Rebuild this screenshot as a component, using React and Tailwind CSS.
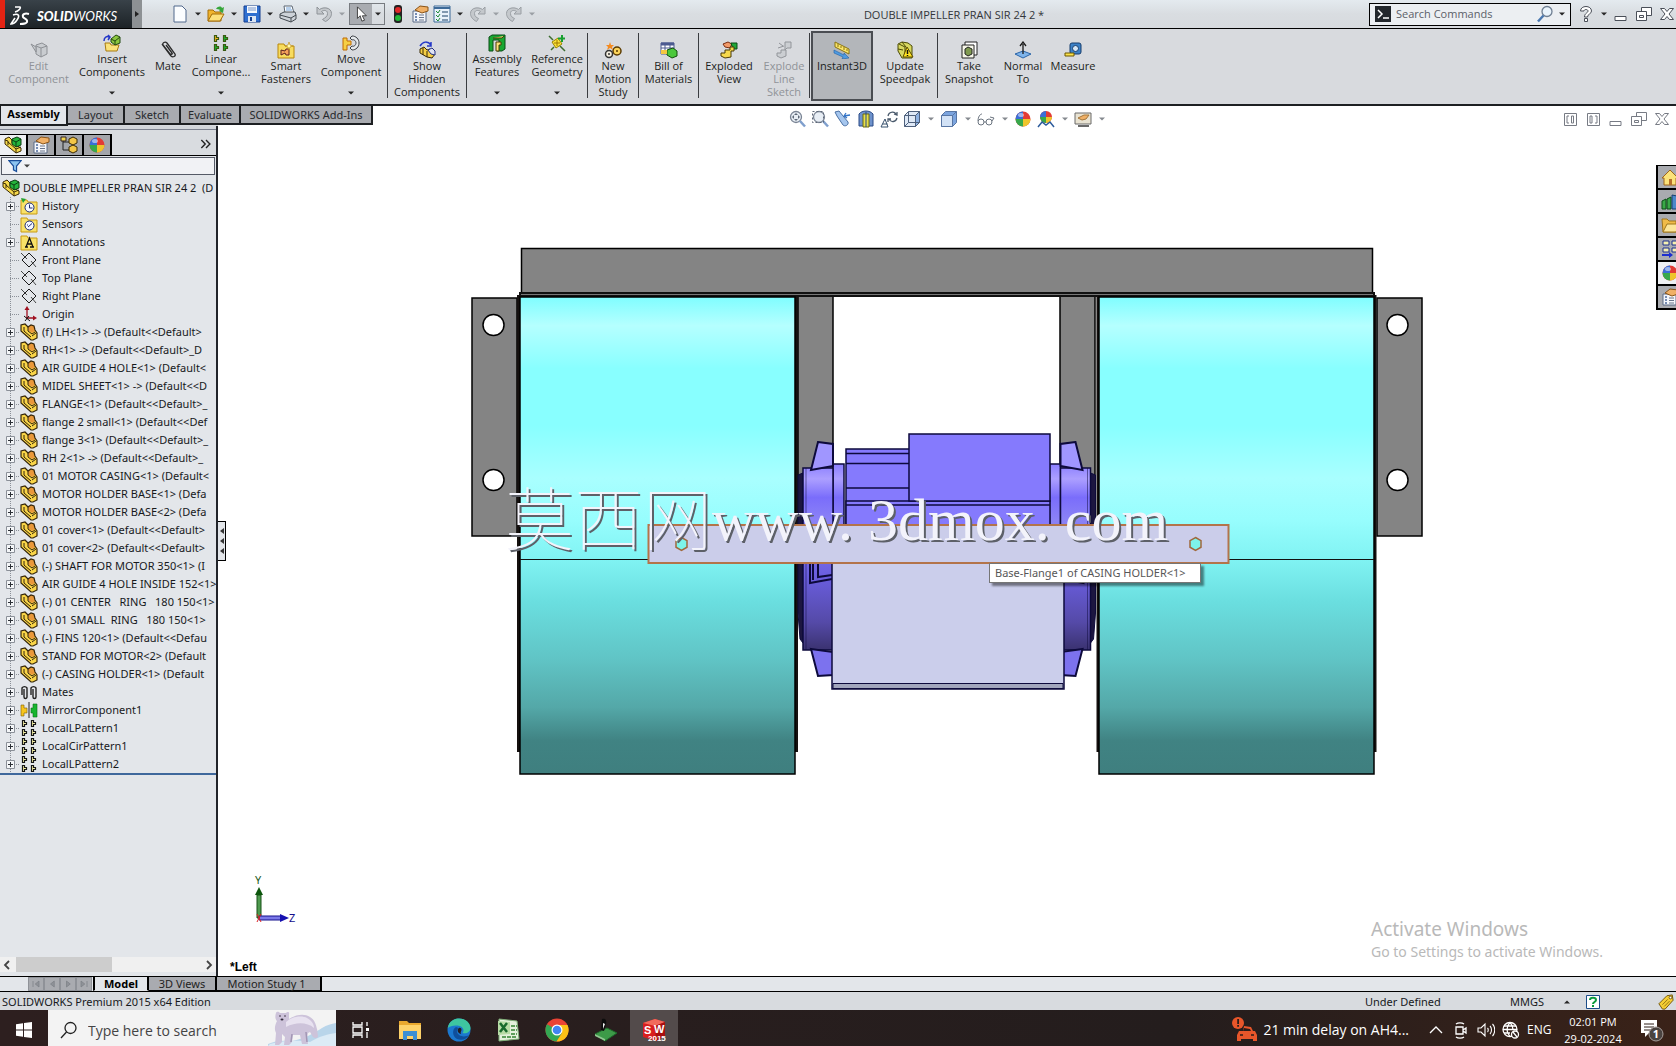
import clsx from 'clsx';

const Icon = ({ size = 'h-[18px] w-[18px]', children }) => (
    <svg viewBox="0 0 18 18" className={clsx('shrink-0', size)} fill="none" aria-hidden="true">
        {children}
    </svg>
);

const Caret = ({ className = 'text-neutral-800', up = false }) => (
    <svg viewBox="0 0 6 4" className={clsx('h-1 w-1.5 shrink-0', className)} fill="currentColor" aria-hidden="true">
        <path d={up ? 'M0 3.5h6L3 .5z' : 'M0 .5h6L3 3.5z'} />
    </svg>
);

/* ---------- shared glyphs ---------- */

const PartIcon = () => (
    <Icon>
        <path d="M1 2l4-1 3 3 3-2 3 1 1 4 2 3v5l-4 2h-2L1 8z" fill="#f9d548" />
        <path d="M8 4l3-2 3 1 1 5-3 2-4-3z" fill="#e9983a" />
        <path d="M1 2v6l10 9h2l4-2v-5l-2-3-1-4-3-1-3 2-3-3z" stroke="#33250a" strokeWidth="1.200" />
        <path d="M4 4v4l7 6M8 4v4l4 3 3-2M12 13l4-3" stroke="#33250a" />
    </Icon>
);

const AssemblyIcon = () => (
    <Icon>
        <path d="M1 3l4-2 3 3v3l9 5v3l-5 2L1 8z" fill="#f6d94c" stroke="#3a2a05" />
        <path d="M1 4l3 1v4M4 6l8 7v4M12 13l5-2" stroke="#3a2a05" />
        <path d="M8 3l5-2 4 2v6l-5 2-4-3z" fill="#25b43c" stroke="#0b3d12" />
        <path d="M8 4l4 2 5-3M12 6v5" stroke="#0b3d12" />
    </Icon>
);

const FolderIcon = ({ kind }) => (
    <Icon>
        <path d="M1 3h6l1 2h9v12H1z" fill="#f8e168" stroke="#c99a12" />
        {kind === 'A' && <path d="M5 14h3M10 14h4M6 14l3.500-9 3.500 9M7.500 11h4" stroke="#111" strokeWidth="1.300" />}
        {kind === 'history' && <path d="M1 1l5 1-3 4z" fill="#21a333" />}
        {kind !== 'A' && (
            <>
                <circle cx="9.500" cy="10.500" r="4.500" fill="#f5f8ff" stroke="#1c2a70" />
                <path d={kind === 'history' ? 'M9.500 7.500v3.500h3' : 'M8 12l4-3.500M7 10h1'} stroke="#1c2a70" />
            </>
        )}
    </Icon>
);

const PlaneIcon = () => (
    <Icon>
        <path d="M9 2l7 7-7 7-7-7z" stroke="#1a1a1a" />
        <path d="M1 2l6 6M11 10l5 6" stroke="#1a1a1a" strokeWidth=".8" />
    </Icon>
);

const OriginIcon = () => (
    <Icon>
        <path d="M7 14V3M6 13h9" stroke="#a01020" strokeWidth="1.300" />
        <path d="M7 1L4.500 5h5zM17 13l-4-2.500v5z" fill="#a01020" />
        <path d="M4 11l6 5M5 16l4-5" stroke="#111" />
    </Icon>
);

const ClipPair = () => (
    <Icon>
        <path d="M2 12V5a3 3 0 015 0v9a1.500 1.500 0 01-3 0V6M11 12V5a3 3 0 015 0v9a1.500 1.500 0 01-3 0V6" stroke="#222" strokeWidth="1.400" />
    </Icon>
);

const MirrorIcon = () => (
    <Icon>
        <path d="M1 4h3v3h3v5H4v3H1z" fill="#f7c51e" stroke="#7c5b00" strokeWidth=".6" />
        <path d="M17 3h-4v4h-2v5h2v4h4z" fill="#16b52f" stroke="#08701a" strokeWidth=".6" />
        <path d="M9 1v16" stroke="#222" />
    </Icon>
);

const PatternIcon = ({ a = '#f8f3a8', b = '#f8f3a8', stroke = '#161616' }) => (
    <Icon>
        <g stroke={stroke} strokeWidth="1.200">
            <path d="M2.500 1.500v6h2v-2h2v-2h-2v-2z" fill={a} />
            <path d="M11.500 1.500v6h2v-2h2v-2h-2v-2z" fill={b} />
            <path d="M2.500 10.500v6h2v-2h2v-2h-2v-2z" fill={b} />
            <path d="M11.500 10.500v6h2v-2h2v-2h-2v-2z" fill={b} />
        </g>
    </Icon>
);

const BallIcon = () => (
    <Icon>
        <circle cx="9" cy="9" r="7.500" fill="#e23b35" />
        <path d="M9 9V1.500A7.500 7.500 0 001.500 9z" fill="#3a6ed8" />
        <path d="M9 9h7.500A7.500 7.500 0 019 16.500z" fill="#eec52c" />
        <path d="M9 9H1.500A7.500 7.500 0 009 16.500z" fill="#37a84c" />
        <ellipse cx="7" cy="5" rx="3" ry="2" fill="#fff" opacity=".5" />
    </Icon>
);

const PropertyIcon = () => (
    <Icon>
        <path d="M2 6h13v11H2z" fill="#f4f6fa" stroke="#5b6b86" />
        <path d="M4 9h2M4 12h2M4 15h2" stroke="#4c6a9c" strokeWidth="1.300" />
        <path d="M8 10h5M8 12.500h5M8 15h5" stroke="#68748a" />
        <path d="M4 5l5-4 8 1v4l-6 2z" fill="#f0b066" stroke="#8a5417" />
    </Icon>
);

const ConfigIcon = () => (
    <Icon>
        <path d="M3 2v12h7M3 6h7" stroke="#222" />
        <path d="M1 1h5v4H1z" fill="#f0d44e" stroke="#322" />
        <path d="M9 3l4-2 4 2v4l-4 2-4-2zM9 11l4-2 4 2v4l-4 2-4-2z" fill="#f2c648" stroke="#3a2a05" />
    </Icon>
);

/* ---------- title bar ---------- */

const titleIcons = {
    New: <path d="M3 1h8l4 4v12H3z" fill="#fbfdff" stroke="#51688c" />,
    Open: (
        <>
            <path d="M1 5h5l2 2h6v9H1z" fill="#f0b42e" stroke="#a36d08" />
            <path d="M1 16l4-7h12l-4 7z" fill="#fce07a" stroke="#a36d08" />
            <path d="M9 4c2-3 5-3 6-1l2-1-1 6-4-2 1-1c-1-1-3-1-4-1z" fill="#37a63a" />
        </>
    ),
    Save: (
        <>
            <path d="M1 1h16v16H1z" fill="#2f6fd0" stroke="#143f8f" />
            <path d="M4 1h10v7H4z" fill="#f5f8fd" />
            <path d="M5 3h8M5 5h8" stroke="#7b97c8" />
            <path d="M5 11h8v6H5z" fill="#dce5f2" />
            <path d="M7 12h2v4H7z" fill="#143f8f" />
        </>
    ),
    Print: (
        <>
            <path d="M5 1h8l2 7H6z" fill="#fff" stroke="#5b6775" />
            <path d="M7 3h5M7 5h6" stroke="#6fa0d8" />
            <path d="M1 9l4-2h11l1 3v4l-5 3-11-4z" fill="#cdd2d8" stroke="#42494f" />
            <path d="M1 10l11 3 5-3M12 13v4" stroke="#42494f" />
        </>
    ),
    Undo: <path d="M2 2v7h7L6.500 6.500c3-2 6-1 6 2s-2 4-5 6l3 2c4-2 6-5 6-8 0-6-8-7-12-4z" fill="#c4c8cc" stroke="#8e9398" />,
    Redo: <path d="M16 2v7H9l2.500-2.500c-3-2-6-1-6 2s2 4 4 5l-2 3c-4-2-6-5-6-8 0-6 8-7 12-4z" fill="#c4c8cc" stroke="#9a9fa4" />,
    Traffic: (
        <>
            <rect x="5" y="0" width="8" height="18" rx="3" fill="#222" />
            <circle cx="9" cy="5" r="3" fill="#e02828" />
            <circle cx="9" cy="13" r="3" fill="#20b838" />
        </>
    ),
    Options: (
        <>
            <path d="M1 1h16v16H1z" fill="#e8f1fb" stroke="#3c6a98" />
            <path d="M1 3h16" stroke="#3c6a98" strokeWidth="2" />
            <path d="M3 6l2 2 2-3M3 10l2 2 2-3M3 14l2 2 2-3" stroke="#1d8a34" />
            <path d="M9 7h6M9 11h6M9 15h6" stroke="#5e7b98" strokeWidth="1.500" />
        </>
    ),
};

const ToolButton = ({ name, arrow = 'text-neutral-800' }) => (
    <button type="button" aria-label={name} className="flex h-[22px] items-center gap-[6px]">
        <Icon>{titleIcons[name]}</Icon>
        {arrow && <Caret className={arrow} />}
    </button>
);

const WindowButtons = ({ stroke = '#4a4f58' }) => (
    <>
        <button type="button" aria-label="Minimize">
            <Icon>
                <path d="M3 11.500h11v4H3z" fill="#fff" stroke={stroke} />
            </Icon>
        </button>
        <button type="button" aria-label="Restore">
            <Icon>
                <path d="M6.500 2.500h10v8h-10z" fill="#fff" stroke={stroke} />
                <path d="M1.500 6.500h10v9h-10z" fill="#fff" stroke={stroke} />
                <path d="M4.500 10.500h4v2h-4z" stroke={stroke} />
            </Icon>
        </button>
        <button type="button" aria-label="Close">
            <Icon>
                <path d="M2.500 3.500h4L9 6.500l2.500-3h4L11 9l4.500 5.500h-4L9 11.500l-2.500 3h-4L7 9z" fill="#fff" stroke={stroke} />
            </Icon>
        </button>
    </>
);

const TitleBar = () => (
    <header className="flex h-[29px] shrink-0 items-center border-b border-black bg-linear-to-b from-[#e4eaef] via-[#d9dde1] to-[#d7dade] font-['Open_Sans',sans-serif] text-[11px]">
        <div className="flex h-full w-[132px] items-center gap-[7px] border-l-5 border-[#e42313] bg-linear-to-b from-[#394249] to-[#1d2327] pt-1 pl-[5px] text-white">
            <svg viewBox="0 0 20 22" className="h-[22px] w-5 shrink-0" fill="none" stroke="#fff" strokeWidth="1.600" aria-hidden="true">
                <path d="M5 2h5c1 1-1 4-5 5M3 10c6-2 7 1 4 5-2 3-3 4-6 4l4-6" />
                <path d="M19 9c-4-1-7 0-6 3 1 2 5 2 4 5-1 2-4 2-7 2" strokeWidth="2" />
            </svg>
            <span className="font-[Lato] text-[13px] leading-4 italic">
                <b className="font-black">SOLID</b>WORKS
            </span>
        </div>
        <button type="button" aria-label="Show menu" className="flex h-full w-[10px] items-center justify-center bg-[#8d9194]">
            <svg viewBox="0 0 4 6" className="h-1.5 w-1" fill="#222" aria-hidden="true">
                <path d="M0 0v6l4-3z" />
            </svg>
        </button>

        <div className="ml-[29px] flex items-center gap-[6px]">
            <ToolButton name="New" />
            <ToolButton name="Open" />
            <ToolButton name="Save" />
            <ToolButton name="Print" />
            <ToolButton name="Undo" arrow="text-[#9a9fa4]" />
        </div>
        <div className="ml-1 flex items-center gap-1">
            <button type="button" aria-label="Select" className="flex h-[22px] w-9 items-center border border-[#777b80]">
                <span className="flex h-full w-[22px] items-center justify-center bg-[#a9acb1]">
                    <Icon size="h-4 w-4">
                        <path d="M5 1v13l3-3 2 6 3-1-2.500-5H15z" fill="#fff" stroke="#333" />
                    </Icon>
                </span>
                <span className="flex flex-1 justify-center">
                    <Caret />
                </span>
            </button>
            <ToolButton name="Traffic" arrow={null} />
            <button type="button" aria-label="File properties">
                <PropertyIcon />
            </button>
            <ToolButton name="Options" />
        </div>
        <div className="ml-[6px] flex items-center gap-[6px]">
            <ToolButton name="Redo" arrow="text-[#9a9fa4]" />
            <ToolButton name="Redo" arrow="text-[#9a9fa4]" />
        </div>

        <h1 className="flex-1 pt-0.5 pl-1 text-center leading-4 text-[#33363a]">DOUBLE IMPELLER PRAN SIR 24 2 *</h1>

        <label className="flex h-[23px] w-[202px] items-center border border-black bg-[#eceff2] px-[5px]">
            <svg viewBox="0 0 16 16" className="h-4 w-4 shrink-0" fill="none" aria-hidden="true">
                <path d="M0 0h16v16H0z" fill="#23272c" />
                <path d="M3 4l4 4-4 4M8 12h6" stroke="#fff" strokeWidth="1.500" />
            </svg>
            <input aria-label="Search Commands" placeholder="Search Commands" className="w-0 flex-1 bg-transparent pl-[5px] outline-none placeholder:text-[#5b6068]" />
            <Icon>
                <circle cx="11" cy="6.500" r="5" fill="#eaf4fc" stroke="#6f7f92" strokeWidth="1.300" />
                <path d="M7.500 10.500L2 16.500" stroke="#4a78b0" strokeWidth="2.500" />
            </Icon>
            <Caret className="ml-[5px] text-neutral-800" />
        </label>
        <div className="ml-[6px] flex items-center gap-[5px]">
            <button type="button" aria-label="Help" className="flex items-center gap-[6px]">
                <Icon>
                    <path d="M3.500 6c0-6 11-6 11 0 0 3-4 3-4 6h-3c0-4 3.500-4 3.500-6 0-2-4-2-4 0zM7.500 13.500h3v3h-3z" fill="#fff" stroke="#4a4f58" />
                </Icon>
                <Caret />
            </button>
            <WindowButtons />
        </div>
    </header>
);

/* ---------- ribbon ---------- */

const ribbonIcons = {
    edit: (
        <g stroke="#8d9095" fill="#c9ccd0">
            <path d="M6 4l6-2 5 3v8l-6 3-5-3z" />
            <path d="M6 5l5 2 6-2M11 7v9M1 3l5 3v5z" />
        </g>
    ),
    insert: (
        <>
            <path d="M2 9h5l1 2h8l-2 6H3z" fill="#fbe27a" stroke="#a87a10" />
            <path d="M8 5l5-4 4 2v6l-5 2-4-3z" fill="#8cc63f" stroke="#234b12" />
            <path d="M8 5l4 2 5-4M12 7v4" stroke="#234b12" />
            <path d="M1 7c0-4 3-5 5-4M5 1l2 2-2 3" stroke="#2538c8" strokeWidth="1.500" />
        </>
    ),
    mate: <path d="M3 3l9 12c2 2 5 0 4-2L8 2C6 0 3 2 4 4l7 9c1 1 3 0 2-1L7 4" stroke="#2a2a2a" strokeWidth="1.300" />,
    smart: (
        <>
            <path d="M1 3h6l1 2h9v12H1z" fill="#f8dc5e" stroke="#b8860b" />
            <path d="M4 9l4 1 1-2h3v6H9l-1-2-4 2z" fill="#f5a15a" stroke="#5a2020" />
            <path d="M12 1l1 3 3 1-3 1-1 3-1-3-3-1 3-1z" fill="#fff8b0" stroke="#b8860b" strokeWidth=".6" />
        </>
    ),
    move: (
        <>
            <path d="M1 4h4v3h4v4H5v5H1z" fill="#f6cf45" stroke="#c06a00" />
            <path d="M8 4l2-2c4 0 7 3 7 7s-3 7-7 7l-2-2 2-2c2 1 4-1 4-3s-2-4-4-3z" fill="#e6e9ec" stroke="#3c3f44" />
        </>
    ),
    hidden: (
        <>
            <path d="M2 8l4-2 3 3 3-1 5 5-3 4-5-1-7-4z" fill="#f6cf45" stroke="#3a2a05" />
            <path d="M10 9l4-2 3 3v4l-4-1z" fill="#dfe3f4" stroke="#222f80" />
            <path d="M2 5c3-5 8-5 11-1M13 1v4H9" stroke="#2538c8" strokeWidth="1.500" />
            <path d="M5 7v7M9 10v6" stroke="#3a2a05" />
        </>
    ),
    features: (
        <>
            <path d="M1 3l3-2h13v14l-3 2H9v-6h2V6H5v11H1z" fill="#19a832" stroke="#0b4d16" />
            <path d="M5 4h9l2-2M8 8h5v3h-2v6H8z" fill="#fbe27a" stroke="#4b3a05" />
        </>
    ),
    reference: (
        <>
            <path d="M4 8l6-4 4 6-6 4z" fill="#fbe338" stroke="#9a8200" />
            <path d="M1 2l4 4M12 12l5 5M3 16l3-3" stroke="#3c6c30" strokeWidth="1.500" />
            <path d="M14 1v7M10 4.500h7" stroke="#18a030" strokeWidth="2" />
            <path d="M9 6v6M6 9h6" stroke="#a07800" />
        </>
    ),
    motion: (
        <>
            <circle cx="13" cy="10" r="4" fill="#fbd35a" stroke="#5a3a00" strokeWidth="1.500" />
            <circle cx="5" cy="13" r="3.500" fill="#f5efe0" stroke="#333" strokeWidth="1.500" />
            <circle cx="13" cy="10" r="1" fill="#5a3a00" />
            <circle cx="5" cy="13" r="1" fill="#333" />
            <path d="M6 1l1 3 3 0-2 2 1 3-3-2-3 2 1-3-2-2h3z" fill="#f58a1e" />
        </>
    ),
    bom: (
        <>
            <path d="M1 2h13v11H1z" fill="#fff" stroke="#4c5a90" />
            <path d="M1 3h13" stroke="#4c5a90" strokeWidth="3" />
            <path d="M1 7h13M5 3v10M10 3v10" stroke="#4c5a90" />
            <path d="M7 9l6-2 4 3v5l-5 2-5-3z" fill="#4cc83c" stroke="#134f0c" />
            <path d="M1 9h6v4H1z" fill="#f5c842" />
        </>
    ),
    exploded: (
        <>
            <path d="M3 3l5-2 4 2-2 4-5-1z" fill="#f29b6a" stroke="#7a2c10" />
            <path d="M11 2h6v6h-4z" fill="#20a838" stroke="#0b4d16" />
            <path d="M1 12h4v-3h5V6h4v4h-3v6l-6 1-4-2z" fill="#f6d94c" stroke="#4b3a05" />
        </>
    ),
    explodeLine: (
        <g stroke="#92959a" fill="#cbced2">
            <path d="M10 1h6v6h-4l-2 2z" />
            <path d="M2 12h4V9h5v6l-5 2-4-2z" />
            <path d="M4 2l4 3M3 7l6-2" />
        </g>
    ),
    instant: (
        <>
            <path d="M2 1l14 7v5L2 6z" fill="#fbe66a" stroke="#8a7410" />
            <path d="M5 3v3M8 5v2M11 6v3M14 8v2" stroke="#8a7410" />
            <path d="M1 9l10 5v-2l5 5-7 1 1-2L1 12z" fill="#4f9be0" stroke="#1f5fa8" strokeWidth=".6" />
        </>
    ),
    update: (
        <>
            <path d="M2 3l4-2 6 1 4 3v12H6L2 10z" fill="#d8d860" stroke="#4b4a05" />
            <path d="M3 3l6 3v10M6 1l4 5M2 8l5 1" stroke="#4b4a05" />
            <path d="M11 6l6 10H7z" fill="#ffe320" stroke="#5a4a00" />
            <path d="M11.500 9v4M11.500 14v1" stroke="#111" strokeWidth="1.500" />
        </>
    ),
    snapshot: (
        <>
            <path d="M5 1h12v13H5z" fill="#fff" stroke="#222" />
            <path d="M2 4h12v13H2z" fill="#f6f6e8" stroke="#222" />
            <path d="M5 8l3-2 4 2v5l-4 2-3-2z" fill="#7f9a50" stroke="#222" />
        </>
    ),
    normal: (
        <>
            <path d="M1 13l8-3 8 3-8 4z" fill="#7fb4ea" stroke="#2a64a8" />
            <path d="M9 13V3M6 5l3-4 3 4" stroke="#1a1a1a" strokeWidth="1.300" />
        </>
    ),
    measure: (
        <>
            <rect x="6" y="2" width="11" height="11" rx="2" fill="#3c82c8" stroke="#163c6c" />
            <circle cx="11.500" cy="7.500" r="3" fill="#d6e6f5" stroke="#163c6c" />
            <path d="M1 12h9v3H1z" fill="#fbe24c" stroke="#6a5600" />
        </>
    ),
};

const ribbonGroups = [
    [
        { label: 'Edit\nComponent', icon: 'edit', width: 'w-[77px]', disabled: true },
        { label: 'Insert\nComponents', icon: 'insert', width: 'w-[70px]', menu: true },
        { label: 'Mate', icon: 'mate', width: 'w-[42px]' },
        { label: 'Linear\nCompone...', icon: 'linear', width: 'w-16', menu: true },
        { label: 'Smart\nFasteners', icon: 'smart', width: 'w-[66px]' },
        { label: 'Move\nComponent', icon: 'move', width: 'w-16 mr-1', menu: true },
    ],
    [{ label: 'Show\nHidden\nComponents', icon: 'hidden', width: 'w-[78px]' }],
    [
        { label: 'Assembly\nFeatures', icon: 'features', width: 'w-[60px]', menu: true },
        { label: 'Reference\nGeometry', icon: 'reference', width: 'w-[60px]', menu: true },
    ],
    [{ label: 'New\nMotion\nStudy', icon: 'motion', width: 'w-[50px]' }],
    [{ label: 'Bill of\nMaterials', icon: 'bom', width: 'w-[59px]' }],
    [
        { label: 'Exploded\nView', icon: 'exploded', width: 'w-[60px]' },
        { label: 'Explode\nLine\nSketch', icon: 'explodeLine', width: 'w-[50px]', disabled: true },
    ],
    [
        { label: 'Instant3D', icon: 'instant', width: 'w-[62px] ml-px', active: true },
        { label: 'Update\nSpeedpak', icon: 'update', width: 'w-16' },
    ],
    [
        { label: 'Take\nSnapshot', icon: 'snapshot', width: 'w-[62px]' },
        { label: 'Normal\nTo', icon: 'normal', width: 'w-[46px]' },
        { label: 'Measure', icon: 'measure', width: 'w-[54px]' },
    ],
];

const ribbonPadding = (item) => {
    if (item.active) return 'border-2 border-[#4a4d52] bg-[#b3b6ba] pt-2';
    return item.menu ? 'pt-[3px]' : 'pt-[10px]';
};

const RibbonButton = ({ item }) => (
    <button
        type="button"
        disabled={item.disabled}
        className={clsx('flex h-[70px] flex-col items-center', item.width, ribbonPadding(item), item.disabled ? 'text-[#909398]' : 'text-[#1c1e21]')}
    >
        {item.icon === 'linear' ? <PatternIcon a="#f7b51e" b="#19b52f" stroke="#3a5a10" /> : <Icon>{ribbonIcons[item.icon]}</Icon>}
        <span className="whitespace-pre">{item.label}</span>
        {item.menu && <Caret className="mt-[13px] text-neutral-800" />}
    </button>
);

const Ribbon = () => (
    <div className="flex h-[77px] shrink-0 border-b-2 border-[#1d1f22] bg-[#d8dade] pt-0.5 font-['Open_Sans',sans-serif] text-[11px] leading-[13px]">
        {ribbonGroups.map((group, index) => (
            <div key={group[0].icon} className="flex">
                {index > 0 && <div className="mt-0.5 h-[65px] w-px bg-[#3a3c40]" />}
                {group.map((item) => (
                    <RibbonButton key={item.icon} item={item} />
                ))}
            </div>
        ))}
    </div>
);

/* ---------- feature manager ---------- */

const tabs = [
    { name: 'Assembly', width: 'w-[68px]' },
    { name: 'Layout', width: 'w-[57px]' },
    { name: 'Sketch', width: 'w-14' },
    { name: 'Evaluate', width: 'w-[60px]' },
    { name: 'SOLIDWORKS Add-Ins', width: 'w-[132px]' },
];

const part = (text) => ({ text, icon: <PartIcon />, open: true });

const treeRows = [
    { text: 'History', icon: <FolderIcon kind="history" />, open: true },
    { text: 'Sensors', icon: <FolderIcon kind="sensor" /> },
    { text: 'Annotations', icon: <FolderIcon kind="A" />, open: true },
    { text: 'Front Plane', icon: <PlaneIcon /> },
    { text: 'Top Plane', icon: <PlaneIcon /> },
    { text: 'Right Plane', icon: <PlaneIcon /> },
    { text: 'Origin', icon: <OriginIcon /> },
    part('(f) LH<1> -> (Default<<Default>'),
    part('RH<1> -> (Default<<Default>_D'),
    part('AIR GUIDE 4 HOLE<1> (Default<'),
    part('MIDEL SHEET<1> -> (Default<<D'),
    part('FLANGE<1> (Default<<Default>_'),
    part('flange 2 small<1> (Default<<Def'),
    part('flange 3<1> (Default<<Default>_'),
    part('RH 2<1> -> (Default<<Default>_'),
    part('01 MOTOR CASING<1> (Default<'),
    part('MOTOR HOLDER BASE<1> (Defa'),
    part('MOTOR HOLDER BASE<2> (Defa'),
    part('01 cover<1> (Default<<Default>'),
    part('01 cover<2> (Default<<Default>'),
    part('(-) SHAFT FOR MOTOR 350<1> (I'),
    part('AIR GUIDE 4 HOLE INSIDE 152<1>'),
    part('(-) 01 CENTER   RING   180 150<1>'),
    part('(-) 01 SMALL  RING   180 150<1>'),
    part('(-) FINS 120<1> (Default<<Defau'),
    part('STAND FOR MOTOR<2> (Default'),
    part('(-) CASING HOLDER<1> (Default'),
    { text: 'Mates', icon: <ClipPair />, open: true },
    { text: 'MirrorComponent1', icon: <MirrorIcon />, open: true },
    { text: 'LocalLPattern1', icon: <PatternIcon />, open: true },
    { text: 'LocalCirPattern1', icon: <PatternIcon />, open: true },
    { text: 'LocalLPattern2', icon: <PatternIcon />, open: true },
];

const TreeBranch = ({ open }) => (
    <svg viewBox="0 0 20 18" className="h-[18px] w-5 shrink-0" fill="none" aria-hidden="true">
        <path d="M10.500 0v18M10 9.500h11" stroke="#8b9098" strokeDasharray="1 1" />
        {open && (
            <>
                <path d="M6.500 5.500h8v8h-8z" fill="#f4f6f8" stroke="#8b9098" />
                <path d="M8 9.500h5M10.500 7v5" stroke="#2c3036" />
            </>
        )}
    </svg>
);

const FeatureManager = () => (
    <aside className="flex min-h-0 flex-1 flex-col border-r-2 border-[#22242a] bg-[#e3e6ea]">
        <div className="h-1 shrink-0 border-b border-[#7d8290] bg-[#d3d6db]" />
        <div className="flex h-[26px] shrink-0 items-end border-b border-black bg-[#d9dce0]">
            {[<AssemblyIcon />, <PropertyIcon />, <ConfigIcon />, <BallIcon />].map((icon, index) => (
                <button
                    key={index}
                    type="button"
                    aria-label={['FeatureManager', 'PropertyManager', 'ConfigurationManager', 'DisplayManager'][index]}
                    className={clsx('flex h-[21px] w-7 items-center justify-center border-t border-r-2 border-black', index === 0 ? 'bg-[#eef0f3]' : 'bg-[#a4a6ab]')}
                >
                    {icon}
                </button>
            ))}
            <button type="button" aria-label="Expand panel" className="mr-[3px] mb-1 ml-auto">
                <Icon size="h-3.5 w-3.5">
                    <path d="M3 4l5 5-5 5M9 4l5 5-5 5" stroke="#222" strokeWidth="1.800" />
                </Icon>
            </button>
        </div>
        <button type="button" aria-label="Filter" className="mx-px mt-px flex h-[18px] shrink-0 items-center gap-[2px] border border-[#555a66] bg-[#f1f2f5] pl-[6px]">
            <Icon size="h-3.5 w-3.5">
                <path d="M1 2h16l-6 7v7l-4-2V9z" fill="#8cc4f0" stroke="#1a4e9a" strokeWidth="1.500" />
            </Icon>
            <Caret className="text-neutral-700" />
        </button>

        <ul className="mt-1 shrink-0 overflow-hidden border-b-2 border-[#3f689c] leading-[18px] whitespace-pre text-[#17191c]">
            <li className="flex h-[18px] items-center gap-[3px] pl-0.5">
                <AssemblyIcon />
                <span>DOUBLE IMPELLER PRAN SIR 24 2  (D</span>
            </li>
            {treeRows.map((row) => (
                <li key={row.text} className="flex h-[18px] items-center">
                    <TreeBranch open={row.open} />
                    {row.icon}
                    <span className="pl-1">{row.text}</span>
                </li>
            ))}
        </ul>

        <div className="mt-auto mb-1 flex h-[15px] shrink-0 items-center bg-[#f0f0f0] px-[3px]">
            <svg viewBox="0 0 8 10" className="h-2.5 w-2" fill="none" stroke="#444" strokeWidth="1.800" aria-hidden="true">
                <path d="M6 1L2 5l4 4" />
            </svg>
            <div className="ml-[5px] h-full w-24 bg-[#cdcdcd]" />
            <svg viewBox="0 0 8 10" className="ml-auto h-2.5 w-2" fill="none" stroke="#444" strokeWidth="1.800" aria-hidden="true">
                <path d="M2 1l4 4-4 4" />
            </svg>
        </div>
    </aside>
);

/* ---------- graphics area ---------- */

const lens = (
    <>
        <circle cx="8" cy="7" r="5.500" fill="#e8eef5" stroke="#7a8494" strokeWidth="1.300" />
        <path d="M12 11l5 5.500" stroke="#7f9fcd" strokeWidth="2.500" />
    </>
);

const viewIcons = {
    'Zoom to Fit': (
        <>
            {lens}
            <path d="M8 3l2 2H6zM8 11l2-2H6zM4 7l2-2v4zM12 7l-2-2v4z" fill="#5e6878" />
        </>
    ),
    'Zoom to Area': (
        <>
            {lens}
            <path d="M1.500 1.500h11v11h-11z" stroke="#5e6878" strokeDasharray="2 2" />
        </>
    ),
    'Previous View': (
        <>
            <path d="M1 2l4-1 9 11c1 3-3 5-5 3L3 6z" fill="#a5c6ee" stroke="#4a70a4" />
            <path d="M10 6l6-1M10 6l2-3M10 6l3 2" stroke="#3274c8" strokeWidth="1.300" />
        </>
    ),
    'Section View': (
        <>
            <path d="M2 4c3-4 11-4 14 0v12H2z" fill="#6e92cc" stroke="#2a4a86" />
            <path d="M6 4h6v13H6z" fill="#e8e04a" stroke="#6d6a10" />
            <path d="M9 2v15" stroke="#2a4a86" />
        </>
    ),
    'View Orientation': (
        <>
            <path d="M1 17l4-8 3 8zM2.500 14h5" stroke="#37506c" />
            <path d="M8 6c1-5 8-5 8-1M9 9c2 4 7 3 8-1M14 4l3 1v-3M11 9H8v3" stroke="#4a5a6c" strokeWidth="1.300" />
        </>
    ),
    'Display Pane': (
        <>
            <path d="M1.500 5.500l4-4h11v11l-4 4h-11z" fill="#dfe9f6" stroke="#4e607c" />
            <path d="M12.500 5.500l4-4v11l-4 4z" fill="#8eb2e2" stroke="#4e607c" />
            <path d="M1.500 5.500h11v11M5.500 1.500v11l-4 4M5.500 12.500h11" stroke="#4e607c" />
        </>
    ),
    'Display Style': (
        <>
            <path d="M1.500 5.500l4-4h11v11l-4 4h-11z" fill="#7ba4de" stroke="#5876a4" />
            <path d="M1.500 5.500h11v11h-11z" fill="#d2e2f6" stroke="#5876a4" />
            <path d="M12.500 5.500l4-4" stroke="#5876a4" />
        </>
    ),
    'Hide/Show Items': (
        <>
            <circle cx="4" cy="12" r="3" stroke="#6c7580" />
            <circle cx="12" cy="12" r="3" stroke="#6c7580" />
            <path d="M7 12h2M1 11c0-4 2-7 4-7M15 11l2-3-4-1" stroke="#6c7580" />
        </>
    ),
    'View Settings': (
        <>
            <path d="M1 3h16v11H1z" fill="#e9e3d2" stroke="#6a6a6a" />
            <path d="M4 16h11" stroke="#6a6a6a" strokeWidth="2" />
            <path d="M4 8l6-3 5 0-3 4-4 1z" fill="#f0b066" stroke="#a5763a" />
        </>
    ),
};

const ViewTool = ({ name, arrow, children }) => (
    <button type="button" aria-label={name} className={clsx('flex items-center gap-[7px]', arrow && 'pr-px')}>
        {children || <Icon>{viewIcons[name]}</Icon>}
        {arrow && <Caret className="text-[#85898f]" />}
    </button>
);

const ViewToolbar = () => (
    <div className="flex h-[26px] items-center justify-center gap-[5px]">
        <ViewTool name="Zoom to Fit" />
        <ViewTool name="Zoom to Area" />
        <ViewTool name="Previous View" />
        <ViewTool name="Section View" />
        <ViewTool name="View Orientation" />
        <ViewTool name="Display Pane" arrow />
        <ViewTool name="Display Style" arrow />
        <ViewTool name="Hide/Show Items" arrow />
        <ViewTool name="Edit Appearance">
            <BallIcon />
        </ViewTool>
        <ViewTool name="Apply Scene" arrow>
            <Icon>
                <circle cx="9" cy="7" r="6" fill="#e23b35" />
                <path d="M9 7V1a6 6 0 00-6 6z" fill="#3a6ed8" />
                <path d="M9 7h6a6 6 0 01-6 6z" fill="#eec52c" />
                <path d="M9 7H3a6 6 0 006 6z" fill="#37a84c" />
                <path d="M1 17l4-5 4 3 4-3 4 5" stroke="#2c5b9c" strokeWidth="1.500" />
            </Icon>
        </ViewTool>
        <ViewTool name="View Settings" arrow />
    </div>
);

const MotorEnd = () => (
    <g stroke="#0d0a3c">
        <path d="M833 464h11v62h-11z" fill="url(#cap)" strokeWidth="1.500" />
        <path d="M798 475l5-2v170l-3-4-2-26z" fill="#1c1640" />
        <path d="M803 468h30v182h-30z" fill="url(#cap)" strokeWidth="1.500" />
        <path d="M806 468v182" strokeOpacity=".5" />
        <path d="M818 442l15 2v22l-22 4z" fill="#a096ff" strokeWidth="2" />
        <path d="M811 649l22 3v23l-15 1z" fill="#7c72ee" strokeWidth="2" />
        <path d="M810 560v23l22-4M813 560v20M818 560v17l14-2" fill="none" strokeWidth="2" />
    </g>
);

const Model = () => (
    <svg viewBox="471 247 952 529" className="h-[529px] w-[952px]" fill="none" aria-label="Double impeller assembly">
        <defs>
            <linearGradient id="shell" x1="0" x2="0" y1="297" y2="774" gradientUnits="userSpaceOnUse">
                <stop offset="0" stopColor="#7ffdff" />
                <stop offset=".06" stopColor="#b5ffff" />
                <stop offset=".15" stopColor="#88ffff" />
                <stop offset=".27" stopColor="#88ffff" />
                <stop offset=".38" stopColor="#a9ffff" />
                <stop offset=".47" stopColor="#96fdfd" />
                <stop offset=".55" stopColor="#80f3f3" />
                <stop offset=".64" stopColor="#6adedf" />
                <stop offset=".76" stopColor="#60c4c5" />
                <stop offset=".86" stopColor="#54a8a8" />
                <stop offset=".93" stopColor="#408383" />
                <stop offset="1" stopColor="#3f7f7f" />
            </linearGradient>
            <linearGradient id="cap" x1="0" x2="0" y1="464" y2="650" gradientUnits="userSpaceOnUse">
                <stop offset="0" stopColor="#8b7fff" />
                <stop offset=".08" stopColor="#ac9fff" />
                <stop offset=".18" stopColor="#7a6dfb" />
                <stop offset=".3" stopColor="#8b82f6" />
                <stop offset=".6" stopColor="#6a5edf" />
                <stop offset=".85" stopColor="#554aa8" />
                <stop offset="1" stopColor="#3a3270" />
            </linearGradient>
        </defs>

        <g stroke="#000" strokeWidth="1.500" fill="#848484">
            <path d="M472 298h45v238h-45zM1377 298h45v238h-45z" />
            <path d="M798 296h35v200h-35zM1060 296h35v200h-35z" />
            <path d="M521.500 248.500h851v46h-851z" />
        </g>
        <path d="M519 294.500h856" stroke="#111" strokeWidth="5" />
        <path d="M521 294.500h852" stroke="#777" />
        <g fill="#fff" stroke="#000" strokeWidth="1.500">
            <circle cx="493.500" cy="325" r="10.500" />
            <circle cx="493.500" cy="480" r="10.500" />
            <circle cx="1397.500" cy="325" r="10.500" />
            <circle cx="1397.500" cy="480" r="10.500" />
        </g>

        <path d="M518.500 295v457M1375 295v457M796.500 296v456M1098 296v456" stroke="#15100f" strokeWidth="3" />
        <g fill="url(#shell)" stroke="#000" strokeWidth="1.500">
            <path d="M520 297h275v477H520z" />
            <path d="M1099 297h275v477h-275z" />
        </g>
        <path d="M520 559.500h275M1099 559.500h275" stroke="#111" />

        <MotorEnd />
        <g transform="translate(1893.500 0) scale(-1 1)">
            <MotorEnd />
        </g>
        <g stroke="#0d0a3c" strokeWidth="1.500" fill="#857afd">
            <path d="M846 449h64v77h-64z" />
            <path d="M846 501h204v25H846z" />
            <path d="M846 453.500h64M846 463.500h64M846 488h64M846 505h204" />
            <path d="M909 434h141v67H909z" />
        </g>
        <path d="M832 560h232v129H832z" fill="#cbceeb" stroke="#0d0a3c" strokeWidth="1.500" />
        <path d="M833 683.500h230v5H833z" fill="#a2a6bd" stroke="#0d0a3c" />

        <path d="M648.500 525h580v38h-580z" fill="#cbcdea" stroke="#b3744a" strokeWidth="2" />
        <g fill="#7df3ea" stroke="#a0683c" strokeWidth="1.500">
            <path d="M681.500 537.500l5.500 3.200v6.500l-5.500 3.200-5.500-3.200v-6.500z" />
            <path d="M1195.500 537.500l5.500 3.200v6.500l-5.500 3.200-5.500-3.200v-6.500z" />
        </g>
    </svg>
);

const Triad = () => (
    <svg viewBox="0 0 44 50" className="h-[50px] w-11" aria-label="View triad">
        <path d="M8 17h4v23H8z" fill="#4f9a4f" stroke="#175017" />
        <path d="M10 9l-4 8h8z" fill="#0c560c" />
        <path d="M10 38h22v4H10z" fill="#7a78e8" stroke="#15108c" />
        <path d="M40 40l-9-4v8z" fill="#1610b0" />
        <path d="M8 36l4 8M12 36l-4 8" stroke="#d22" />
    </svg>
);

const paneIcons = [
    {
        name: 'Resources',
        icon: (
            <Icon>
                <path d="M1 10l8-8 8 8h-2v7H3v-7z" fill="#fbe27a" stroke="#a0661a" />
                <path d="M8 11h3v6H8z" fill="#b8702a" />
            </Icon>
        ),
    },
    {
        name: 'Design Library',
        icon: (
            <Icon>
                <path d="M1 9l4-2v10H1zM6 7l4-2v12H6z" fill="#3aa848" stroke="#0b4d16" />
                <path d="M11 3l5 1v13h-5z" fill="#4c88c8" stroke="#173e70" />
            </Icon>
        ),
    },
    {
        name: 'File Explorer',
        icon: (
            <Icon>
                <path d="M1 3h5l2 2h7v11H2z" fill="#f0bb48" stroke="#a0761a" />
                <path d="M2 16l4-8h12l-3 8z" fill="#fce69a" stroke="#a0761a" />
            </Icon>
        ),
    },
    {
        name: 'View Palette',
        icon: (
            <Icon>
                <path d="M2 1h6v4H2zM11 1h6v4h-6zM2 8h6v4H2zM11 8h6v4h-6z" fill="#f6f1b0" stroke="#1c2e90" />
                <path d="M1 14h7v-2l4 3-4 3v-2H1z" fill="#1c2ed0" />
            </Icon>
        ),
    },
    { name: 'Appearances', icon: <BallIcon />, active: true },
    { name: 'Custom Properties', icon: <PropertyIcon /> },
];

const GraphicsArea = () => (
    <main className="relative flex min-w-0 flex-1 flex-col overflow-hidden bg-white">
        <ViewToolbar />
        <div className="absolute top-[4px] right-[5px] flex items-center gap-[5px]">
            <button type="button" aria-label="Collapse left">
                <Icon>
                    <path d="M3.500 3.500h12v12h-12z" stroke="#777b84" />
                    <path d="M8 6H6v7h2M10.500 6h2v7h-2z" stroke="#777b84" />
                </Icon>
            </button>
            <button type="button" aria-label="Collapse right">
                <Icon>
                    <path d="M3.500 3.500h12v12h-12z" stroke="#777b84" />
                    <path d="M6 6h2v7H6zM11 6h2v7h-2" stroke="#777b84" />
                </Icon>
            </button>
            <WindowButtons stroke="#777b84" />
        </div>

        <div className="mt-[115px] flex justify-center">
            <div className="relative shrink-0">
                <Model />
                <p className="absolute top-[233px] left-[34px] flex items-start font-['Liberation_Serif','Noto_Sans_CJK_SC',serif] text-[60px] leading-[80px] whitespace-nowrap text-[#f3f3fb] [text-shadow:2px_2px_0_#5d6068]">
                    <span className="font-['Noto_Sans_CJK_SC',sans-serif] text-[69px] leading-[70px] font-thin">莫西网</span>
                    <span>www. 3dmox. com</span>
                </p>
                <div role="tooltip" className="absolute top-[316px] left-[518px] w-[212px] border border-[#767676] bg-white px-[5px] leading-[18px] whitespace-nowrap text-[#575757] shadow-[3px_3px_2px_rgba(0,0,0,0.45)]">
                    Base-Flange1 of CASING HOLDER&lt;1&gt;
                </div>
            </div>
        </div>

        <div className="absolute top-[415px] left-0 flex h-10 w-2 flex-col items-center justify-center gap-1 border border-l-0 border-black bg-[#e3e6ea]">
            {[0, 1, 2].map((dot) => (
                <svg key={dot} viewBox="0 0 4 6" className="h-1.5 w-1" aria-hidden="true">
                    <path d="M4 0v6L0 3z" fill="#333" />
                </svg>
            ))}
        </div>

        <nav className="absolute top-[59px] right-0 flex w-5 flex-col border-t border-l-2 border-black">
            {paneIcons.map((pane) => (
                <button
                    key={pane.name}
                    type="button"
                    aria-label={pane.name}
                    className={clsx('flex h-6 items-center overflow-hidden border-b-2 border-black pl-[3px]', pane.active ? 'bg-[#eef0f3]' : 'bg-[#a9abb0]')}
                >
                    {pane.icon}
                </button>
            ))}
        </nav>

        <div className="mt-auto flex items-end justify-between">
            <div>
                <div className="relative mb-[30px] ml-[31px] w-11">
                    <Triad />
                    <span className="absolute -top-1.5 left-[6px] leading-4 text-[#1c5a1c]">Y</span>
                    <span className="absolute top-8 left-10 leading-4 text-[#15108c]">Z</span>
                </div>
                <p className="pl-3 font-[Arial,'Liberation_Sans',sans-serif] text-[12px] leading-[18px] font-bold text-black">*Left</p>
            </div>
            <div className="mr-[69px] mb-[14px] w-[236px] whitespace-nowrap text-[#b9b9b9]">
                <p className="text-[19px] leading-[25px]">Activate Windows</p>
                <p className="text-[14px] leading-5">Go to Settings to activate Windows.</p>
            </div>
        </div>
    </main>
);

/* ---------- bottom bars ---------- */

const SheetTabs = () => (
    <div className="flex h-4 shrink-0 border-y border-black bg-[#e3e6ea] leading-3">
        <div className="ml-7 flex">
            {['M4 4v8M12 4L7 8l5 4z', 'M11 4L6 8l5 4z', 'M6 4l5 4-5 4z', 'M12 4v8M4 4l5 4-5 4z'].map((d) => (
                <button key={d} type="button" aria-label="Scroll tabs" className="h-3.5 w-4 border border-[#8f9298] bg-[#a9abb0]">
                    <svg viewBox="0 0 16 16" className="h-3 w-3.5" fill="#8f9298" stroke="#7c8086" aria-hidden="true">
                        <path d={d} />
                    </svg>
                </button>
            ))}
        </div>
        <button type="button" className="ml-px w-14 border-x-2 border-b border-x-black border-b-transparent font-bold">Model</button>
        <button type="button" className="w-[68px] border-r-2 border-b border-black bg-[#a9abb0] text-[#222]">3D Views</button>
        <button type="button" className="w-[105px] border-r-2 border-b border-black bg-[#a9abb0] pr-1 text-[#222]">Motion Study 1</button>
    </div>
);

const StatusBar = () => (
    <footer className="flex h-[18px] shrink-0 items-center bg-[#d8dbdf] pt-px pl-0.5 leading-4 text-[#17191c]">
        <span className="flex-1">SOLIDWORKS Premium 2015 x64 Edition</span>
        <span className="w-[145px]">Under Defined</span>
        <span className="w-[54px]">MMGS</span>
        <Caret up />
        <svg viewBox="0 0 14 14" className="ml-4 h-3.5 w-3.5" fill="none" aria-hidden="true">
            <path d="M.5.5h13v13H.5z" fill="#fff" stroke="#1b4c88" />
            <path d="M4 5c0-3 6-3 6 0 0 2-3 2-3 4M7 10v2" stroke="#0c9a3c" strokeWidth="2" />
        </svg>
        <Icon size="ml-[58px] mr-0.5 h-4 w-4">
            <path d="M1 11l9-9 6-1 1 6-9 10-3 0z" fill="#f6cf35" stroke="#6a4d00" />
            <circle cx="14" cy="4" r="1.500" fill="#fff" stroke="#6a4d00" />
            <path d="M5 12l6-6M7 14l6-6" stroke="#8a6a10" />
        </Icon>
    </footer>
);

const PolarBear = () => (
    <svg viewBox="0 0 68 36" className="h-9 w-[68px] self-start" aria-hidden="true">
        <path d="M0 34c6-3 14-4 24-3 12-2 22-8 30-13 5-3 9-4 14-5v23H0z" fill="#b9d5ea" />
        <path d="M2 34c14-4 30-4 40-2 10-6 18-8 26-9v13H0z" fill="#dcebf6" />
        <path d="M8 3c1-2 3-1 4 0h6c1-2 4-1 3 1l0 5c6-4 15-6 21-2 5 3 6 8 7 12l1 7c0 2-3 3-5 1l-3-5-2 1-1 5 1 6h-6l-2-9-7 0-1 7-3 3h-5l1-8-3-3 0 8-3 3h-4l1-12c-2-4-1-8 1-12-2-2-2-5-1-8z" fill="#cdc3da" />
        <path d="M18 12c6-6 18-8 24-2 3 3 4 5 4 8-7-6-18-6-28-1z" fill="#e8e2f0" />
        <path d="M24 24l-1 8M38 22l1 10" stroke="#a296b4" strokeWidth="1.500" fill="none" />
        <circle cx="12" cy="6" r=".8" fill="#332c3c" />
        <circle cx="17" cy="6" r=".8" fill="#332c3c" />
        <ellipse cx="14" cy="9.500" rx="1.500" ry="1.100" fill="#332c3c" />
    </svg>
);

const AppButton = ({ name, children }) => (
    <button type="button" aria-label={name} className="flex h-full w-[49px] items-center justify-center">
        <svg viewBox="0 0 24 24" className="h-6 w-6" fill="none" aria-hidden="true">
            {children}
        </svg>
    </button>
);

const TrayIcon = ({ name, children }) => (
    <button type="button" aria-label={name}>
        <svg viewBox="0 0 18 18" className="h-[18px] w-[18px]" fill="none" stroke="#fff" strokeWidth="1.300" aria-hidden="true">
            {children}
        </svg>
    </button>
);

const Taskbar = () => (
    <div className="h-9 shrink-0 overflow-hidden bg-linear-to-r from-[#2d1f1f] via-[#241d1d] via-70% to-[#3a2218] font-['Open_Sans',sans-serif] text-white">
        <div className="flex h-10 items-center">
            <button type="button" aria-label="Start" className="flex h-full w-12 items-center justify-center">
                <svg viewBox="0 0 16 16" className="h-4 w-4" fill="#fff" aria-hidden="true">
                    <path d="M0 2.200L7 1.200v6.300H0zM8 1l8-1v7.500H8zM0 8.500h7v6.300l-7-1zM8 8.500h8V16l-8-1z" />
                </svg>
            </button>
            <label className="flex h-full w-[288px] items-center overflow-hidden bg-[#f3f3f3] pl-3">
                <Icon>
                    <circle cx="10.500" cy="7" r="5.500" stroke="#222" strokeWidth="1.300" />
                    <path d="M6.500 11L1 17" stroke="#222" strokeWidth="1.300" />
                </Icon>
                <input aria-label="Type here to search" placeholder="Type here to search" className="w-0 flex-1 bg-transparent pl-[10px] text-[14px] outline-none placeholder:text-[#444]" />
                <PolarBear />
            </label>
            <AppButton name="Task View">
                <path d="M4 4v3h9V4M4 20v-3h9v3M4 9h9v6H4zM18 4v4M18 14v6" stroke="#fff" strokeWidth="1.300" />
                <path d="M17 10h3v3h-3z" fill="#fff" />
            </AppButton>
            <AppButton name="File Explorer">
                <path d="M1 3h8l2 2h12v16H1z" fill="#e9a82e" />
                <path d="M1 7h22v14H1z" fill="#fdd26a" />
                <path d="M5 13h14v9h-4v-4H9v4H5z" fill="#3b8fd4" />
            </AppButton>
            <AppButton name="Edge">
                <circle cx="12" cy="12" r="11.500" fill="#1b78cf" />
                <path d="M.8 10C2 3 7 .5 12 .5c7 0 11.500 5 11.500 9.500 0 4-4 6-8 5 2-2 1-6-3-7C8 7 3 8 .8 10z" fill="#3ec6a0" />
                <path d="M9 9c-4 2-4 9 1 12 5 2 10 0 12-4-5 3-11 1-12-3-.5-2 .5-3 1.500-4z" fill="#0f4f9c" />
                <path d="M12 10c-2 1-2 5 2 6-1-2 .5-3 .5-4 0-1.500-1-2.500-2.500-2z" fill="#241d1d" />
            </AppButton>
            <AppButton name="Excel">
                <path d="M3 1l18 2 2 18-20 2z" fill="#e4f1dc" stroke="#7fae78" />
                <path d="M2 3l12 1v12L2 17z" fill="#b8dca6" />
                <path d="M4 5l7 9M11 5l-7 9" stroke="#186a2c" strokeWidth="2.500" />
                <path d="M15 8h6M15 12h6M6 19h15M15 16h6" stroke="#5f9f5c" strokeWidth="2" strokeDasharray="4 1" />
            </AppButton>
            <AppButton name="Chrome">
                <circle cx="12" cy="12" r="11.500" fill="#ea4335" />
                <path d="M12 12L2 6.200A11.500 11.500 0 0011.500 23.500L17 15z" fill="#34a853" />
                <path d="M12 12l5 3-5.500 8.500A11.500 11.500 0 0022.500 7H12z" fill="#fbc116" />
                <circle cx="12" cy="12" r="5.500" fill="#fff" />
                <circle cx="12" cy="12" r="4.300" fill="#4285f4" />
            </AppButton>
            <AppButton name="Cutting table">
                <path d="M1 16l12-6 10 5-12 8z" fill="#3d9a48" stroke="#1d6a2a" />
                <path d="M1 16l10 5v2L1 18z" fill="#8fc890" />
                <path d="M8 1c3-1 5 1 4 5l-2 7-3-1z" fill="#0d0d0d" />
                <path d="M9 5l2 1-2 5z" fill="#eee" />
            </AppButton>
            <button type="button" aria-label="SOLIDWORKS 2015" className="flex h-full w-12 items-center justify-center bg-[#534b4b]">
                <svg viewBox="0 0 24 24" className="h-6 w-6" aria-hidden="true">
                    <path d="M1 5l12-4 10 3v14l-9 5L1 19z" fill="#d81e1e" />
                    <path d="M1 5l12-4 10 3-10 4z" fill="#f26a5c" />
                    <path d="M13 8l10-4v14l-9 5z" fill="#a80f0f" />
                    <text x="2" y="16" fontFamily="Liberation Sans" fontSize="11" fontWeight="700" fill="#fff">S</text>
                    <text x="12" y="15" fontFamily="Liberation Sans" fontSize="11" fontWeight="700" fill="#fff">W</text>
                    <text x="6" y="23" fontFamily="Liberation Sans" fontSize="8" fontWeight="700" fill="#fff">2015</text>
                </svg>
            </button>

            <button type="button" className="ml-auto flex items-center gap-[6px] text-[14px] leading-5">
                <svg viewBox="0 0 26 26" className="h-[26px] w-[26px]" fill="#e8562a" aria-hidden="true">
                    <circle cx="7" cy="6" r="6" />
                    <path d="M6.200 2h1.800v5H6.200zM6.200 8h1.800v1.800H6.200z" fill="#2b1d1a" />
                    <path d="M13 9l7 1 2 4h2l2 4v6h-4v-2H10v2H6v-6l2-4h4z" />
                    <path d="M12 14l1-3 6 1 1 2z" fill="#2b1d1a" />
                    <path d="M9 18h3M20 18h3" stroke="#2b1d1a" strokeWidth="1.500" />
                </svg>
                21 min delay on AH4...
            </button>
            <div className="ml-[18px] flex items-center gap-[7px]">
                <TrayIcon name="Show hidden icons">
                    <path d="M3 12l6-6 6 6" />
                </TrayIcon>
                <TrayIcon name="Meet Now">
                    <path d="M4 6h7v7H4zM11 9l3-2v5l-3-2M4 3c2-1.500 6-1.500 8 0M4 16c2 1.500 6 1.500 8 0" />
                </TrayIcon>
                <TrayIcon name="Volume">
                    <path d="M1 7h3l4-4v12l-4-4H1zM10.500 7c1 1 1 3 0 4M13 5c2 2 2 6 0 8M15.500 3c3 3 3 9 0 12" strokeWidth="1.100" />
                </TrayIcon>
                <TrayIcon name="Network">
                    <circle cx="8" cy="8.500" r="7" />
                    <path d="M8 1.500c-4 4-4 10 0 14M8 1.500c3 3 3 5 3 7M1 8.500h14M2 5h12M2 12h6" />
                    <circle cx="13" cy="13.500" r="3.500" fill="#2e1e19" />
                    <path d="M11 11l4 5" />
                </TrayIcon>
                <span className="w-[26px] text-[12px] leading-4">ENG</span>
            </div>
            <div className="ml-[9px] w-[62px] text-center text-[11px] leading-[17px] whitespace-nowrap">
                <p>02:01 PM</p>
                <p>29-02-2024</p>
            </div>
            <button type="button" aria-label="Notifications" className="mr-3 ml-4">
                <svg viewBox="0 0 24 24" className="h-6 w-6" aria-hidden="true">
                    <path d="M1 2h16v13H9l-4 4v-4H1z" fill="#fff" />
                    <path d="M4 6h10M4 9h10M4 12h7" stroke="#2e1e19" />
                    <circle cx="16" cy="16" r="7" fill="#4a4340" stroke="#a59d9a" />
                    <text x="16" y="20" textAnchor="middle" fontFamily="Noto Sans" fontSize="11" fontWeight="700" fill="#fff">1</text>
                </svg>
            </button>
        </div>
    </div>
);

export default function App() {
    return (
        <div className="flex h-screen flex-col overflow-hidden bg-[#d8dade] font-['Noto_Sans','Noto_Sans_CJK_SC',sans-serif] text-[11px]">
            <TitleBar />
            <Ribbon />
            <div className="flex min-h-0 flex-1">
                <div className="flex w-[218px] shrink-0 flex-col">
                    <nav className="relative z-10 flex h-5 w-max shrink-0 items-start leading-4">
                        {tabs.map((tab, index) => (
                            <button
                                key={tab.name}
                                type="button"
                                className={clsx(
                                    'border-r-2 border-b-2 border-[#1d1f22]',
                                    tab.width,
                                    index === 0 ? 'h-5 border-l bg-[#e3e6ea] pb-0.5 font-bold' : 'h-[19px] bg-[#a9abb0] text-[#26282c]',
                                )}
                            >
                                {tab.name}
                            </button>
                        ))}
                    </nav>
                    <FeatureManager />
                </div>
                <GraphicsArea />
            </div>
            <SheetTabs />
            <StatusBar />
            <Taskbar />
        </div>
    );
}
